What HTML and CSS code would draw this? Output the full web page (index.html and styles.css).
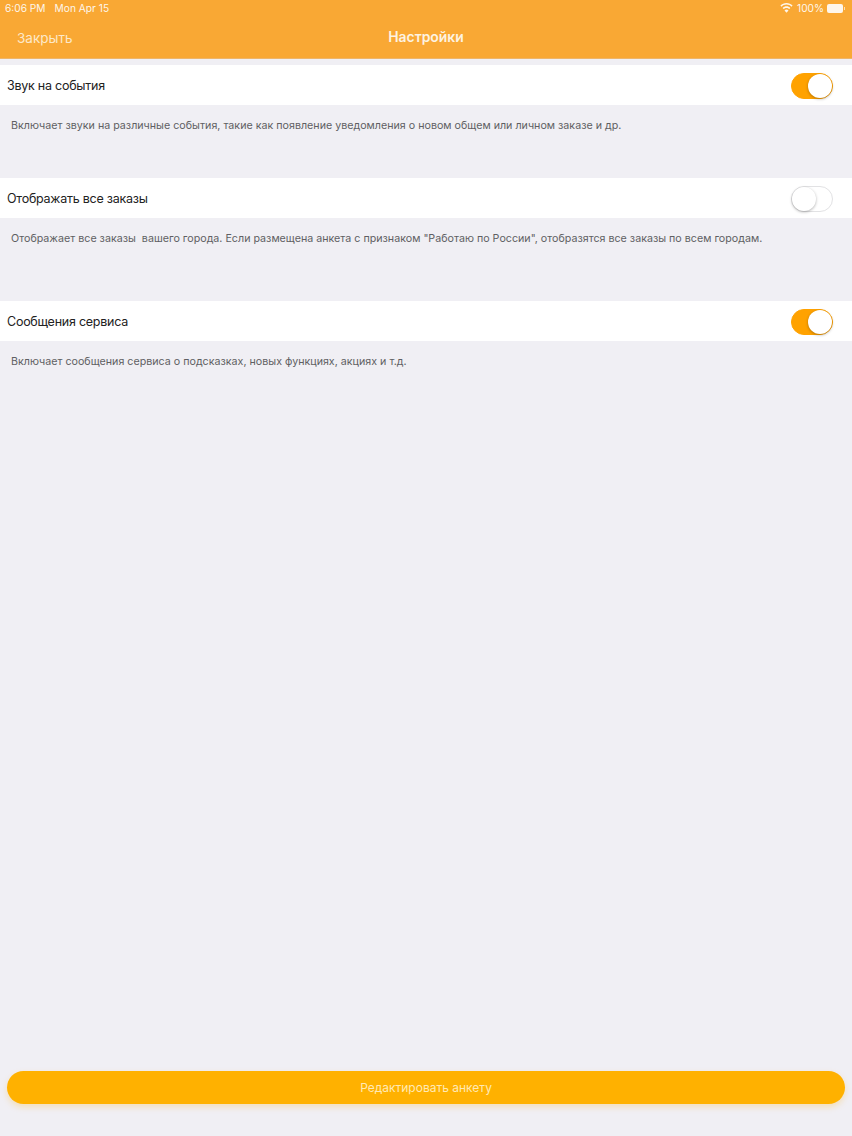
FILE: index.html
```html
<!DOCTYPE html>
<html lang="ru">
<head>
<meta charset="utf-8">
<title>Настройки</title>
<link rel="stylesheet" href="styles.css">
</head>
<body>
<div class="screen">
  <header class="header">
    <div class="status">
      <div class="status-left"><span>6:06 PM</span><span>Mon Apr 15</span></div>
      <div class="status-right">
        <svg class="wifi" width="13" height="10" viewBox="0 0 13 10"><path d="M6.5 0C4.1 0 2 .9.4 2.5l1.1 1.2C2.8 2.400 4.600 1.600 6.500 1.600s3.700.8 5 2.100l1.100-1.200C11 .9 8.900 0 6.500 0zM6.500 3.300c-1.500 0-2.900.6-3.900 1.600l1.100 1.200c.7-.7 1.700-1.200 2.800-1.200s2.100.5 2.800 1.200l1.100-1.200c-1-1-2.400-1.600-3.900-1.600zM6.500 6.600c-.8 0-1.500.3-2 .8l2 2.300 2-2.300c-.5-.5-1.200-.8-2-.8z" fill="#fff"/></svg>
        <span>100%</span>
        <span class="battery"><span class="battery-fill"></span></span>
      </div>
    </div>
    <nav class="nav">
      <span class="nav-close">Закрыть</span>
      <span class="nav-title">Настройки</span>
    </nav>
  </header>
  <main class="content">
    <section class="group group-a">
      <div class="row"><span class="row-label">Звук на события</span><span class="switch on"><span class="knob"></span></span></div>
      <p class="desc">Включает звуки на различные события, такие как появление уведомления о новом общем или личном заказе и др.</p>
    </section>
    <section class="group group-b">
      <div class="row"><span class="row-label">Отображать все заказы</span><span class="switch"><span class="knob"></span></span></div>
      <p class="desc">Отображает все заказы&nbsp; вашего города. Если размещена анкета с признаком "Работаю по России", отобразятся все заказы по всем городам.</p>
    </section>
    <section class="group">
      <div class="row"><span class="row-label">Сообщения сервиса</span><span class="switch on"><span class="knob"></span></span></div>
      <p class="desc">Включает сообщения сервиса о подсказках, новых функциях, акциях и т.д.</p>
    </section>
  </main>
  <div class="footer"><div class="edit-btn">Редактировать анкету</div></div>
</div>
</body>
</html>
```
FILE: styles.css
```css
* { box-sizing: border-box; }
html, body { margin: 0; padding: 0; }
body { width: 852px; height: 1136px; background: #f0eff4; font-family: "Inter", "Roboto", sans-serif; overflow: hidden; }
.screen { height: 1136px; display: flex; flex-direction: column; }
.header { height: 58px; background: #f9a834; color: #fff; flex: none; box-shadow: 0 1px 0 #eeb56a; }
.status { height: 16px; padding: 0 6px 0 5px; display: flex; justify-content: space-between; align-items: center; font-size: 10.2px; color: #fff; opacity: .9; }
.status-left { display: flex; gap: 9px; }
.status-right { display: flex; align-items: center; gap: 3px; }
.wifi { margin-right: 1px; }
.battery { width: 19px; height: 9px; border-radius: 2px; padding: 0 3px 0 0; display: block; position: relative; }
.battery-fill { display: block; width: 100%; height: 100%; background: #fff; border-radius: 2px; }
.battery::after { content: ""; position: absolute; right: 1px; top: 3px; width: 1px; height: 3px; background: #fff; opacity: .7; }
.nav { height: 42px; position: relative; display: flex; align-items: center; justify-content: center; }
.nav-close { position: absolute; left: 17px; top: 14px; font-size: 13.5px; color: #fde8c9; }
.nav-title { font-size: 13.9px; font-weight: 600; color: #fdf3e2; }
.content { flex: 1; padding-top: 7px; }
.group-a { height: 113px; }
.group-b { height: 123px; }
.row { height: 40px; background: #fff; display: flex; align-items: center; justify-content: space-between; padding: 1px 19px 0 7px; }
.row-label { font-size: 12.5px; letter-spacing: -.25px; color: #222; }
.desc { margin: 0; padding: 14px 11px 0; font-size: 10.7px; line-height: 14px; color: #5f5f63; }
.switch { width: 42px; height: 26px; border-radius: 13px; border: 1px solid #e2e2e4; background: #fff; position: relative; display: block; }
.switch.on { background: #ffa200; border-color: #ffa200; }
.knob { position: absolute; left: 0; top: 0; width: 24px; height: 24px; border-radius: 50%; background: #fff; box-shadow: 0 1px 3px rgba(0,0,0,.3); }
.switch.on .knob { left: 16px; }
.footer { padding: 0 7px 32px; flex: none; }
.edit-btn { height: 33px; border-radius: 16.5px; background: #ffb100; color: #ffe9b5; font-size: 12px; display: flex; align-items: center; justify-content: center; box-shadow: 0 3px 6px rgba(255,177,0,.25); }
```
